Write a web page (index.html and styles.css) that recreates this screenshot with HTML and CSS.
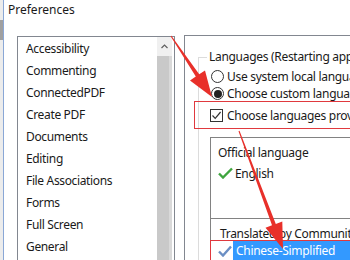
FILE: index.html
```html
<!DOCTYPE html>
<html lang="en">
<head>
    <meta charset="UTF-8">
    <title>Preferences</title>
    <link rel="stylesheet" href="styles.css">
</head>
<body>
    <div class="window">
        <div class="edge"><div class="edge-block"></div></div>

        <div class="main">
            <div class="title">Preferences</div>

            <div class="content">
                <!-- Categories -->
                <div class="listbox">
                    <ul class="categories">
                        <li>Accessibility</li>
                        <li>Commenting</li>
                        <li>ConnectedPDF</li>
                        <li>Create PDF</li>
                        <li>Documents</li>
                        <li>Editing</li>
                        <li>File Associations</li>
                        <li>Forms</li>
                        <li>Full Screen</li>
                        <li>General</li>
                    </ul>
                    <div class="scrollbar">
                        <div class="scroll-up">
                            <svg width="7" height="5" viewBox="0 0 7 5"><path d="M0.5 4 L3.5 1 L6.5 4" fill="none" stroke="#606060" stroke-width="1.2"/></svg>
                        </div>
                        <div class="scroll-thumb"></div>
                    </div>
                </div>

                <!-- Languages page -->
                <div class="panel">
                    <div class="group">
                        <div class="group-title">Languages (Restarting application required)</div>
                        <div class="options">
                            <div class="row first">
                                <span class="radio"></span>
                                <span class="label">Use system local language</span>
                            </div>
                            <div class="row">
                                <span class="radio checked"></span>
                                <span class="label">Choose custom language</span>
                            </div>
                            <div class="row check-row">
                                <span class="checkbox">
                                    <svg width="11" height="11" viewBox="0 0 11 11"><path d="M1.5 5.5 L4.2 8.3 L9.6 2" fill="none" stroke="#333" stroke-width="1.2"/></svg>
                                </span>
                                <span class="label">Choose languages provided by community</span>
                            </div>

                            <div class="lang-box">
                                <div class="lang-section official">
                                    <div class="lang-label">Official language</div>
                                    <div class="lang-item">
                                        <svg class="tick" width="15" height="12" viewBox="0 0 15 12"><path d="M1 6.5 L5 10.5 L14 1.5" fill="none" stroke="#3fa53f" stroke-width="2.4"/></svg>
                                        <span>English</span>
                                    </div>
                                </div>
                                <div class="lang-section community">
                                    <div class="lang-label">Translated by Community</div>
                                    <div class="lang-item selected">
                                        <svg class="tick" width="14" height="12" viewBox="0 0 14 12"><path d="M1 6.5 L5 10.5 L13 1.5" fill="none" stroke="#6b8fc4" stroke-width="2.4"/></svg>
                                        <span class="highlight">Chinese-Simplified</span>
                                    </div>
                                </div>
                            </div>
                        </div>
                    </div>
                </div>
            </div>
        </div>
    </div>

    <!-- Annotations drawn over the dialog -->
    <svg class="marks" width="350" height="260" viewBox="0 0 350 260">
        <rect x="194.5" y="101.5" width="170" height="27" fill="none" stroke="#e0393e" stroke-width="1"/>
        <rect x="210.5" y="240.5" width="150" height="30" fill="none" stroke="#e0393e" stroke-width="1"/>
        <polygon fill="#e8302a" points="170.6,36.3 195.8,76.5 190,80.4 212,97 205,70.4 199.2,74.3 171.4,35.7"/>
        <polygon fill="#e8302a" points="238.5,131.2 272,225.3 265.5,227.7 283,249 282.3,221.5 275.8,223.9 239.5,130.8"/>
    </svg>
</body>
</html>
```

FILE: styles.css
```css
* {
    box-sizing: border-box;
    margin: 0;
    padding: 0;
}

body {
    width: 350px;
    height: 260px;
    overflow: hidden;
    position: relative;
    background-color: #ffffff;
    color: #1a1a1a;
    font-family: 'Noto Sans', 'Open Sans', sans-serif;
    font-size: 12px;
}

.window {
    display: flex;
    height: 260px;
    overflow: hidden;
}

.edge {
    width: 4px;
    background-color: #ececec;
    border-right: 1px solid #8aa7d6;
    padding-top: 20px;
}

.edge-block {
    width: 3px;
    height: 20px;
    background-color: #a0a0a0;
}

.main {
    flex: 1;
    padding-left: 4px;
    min-width: 0;
}

.title {
    height: 20px;
    line-height: 20px;
}

.content {
    display: flex;
    align-items: flex-start;
    margin-top: 16px;
    margin-left: 9px;
}

/* category list */

.listbox {
    display: flex;
    flex: none;
    width: 158px;
    height: 230px;
    border: 1px solid #828790;
    padding-right: 2px;
}

.categories {
    flex: 1;
    list-style-type: none;
    padding-top: 1px;
}

.categories li {
    height: 22px;
    line-height: 22px;
    padding-left: 8px;
    letter-spacing: -0.35px;
}

.scrollbar {
    width: 15px;
    background-color: #f0f0f0;
}

.scroll-up {
    height: 18px;
    display: flex;
    align-items: center;
    justify-content: center;
}

.scroll-thumb {
    height: 210px;
    margin-top: 1px;
    background-color: #c9c9c9;
    border-right: 3px solid #d9d9d9;
}

/* languages page */

.panel {
    flex: 1;
    min-width: 0;
    height: 230px;
    margin-left: 9px;
    margin-top: -1px;
    border-top: 1px solid #828790;
    border-left: 1px solid #828790;
    padding-top: 21px;
    padding-left: 13px;
    white-space: nowrap;
    overflow: hidden;
    letter-spacing: -0.3px;
}

.group {
    border-top: 1px solid #dcdcdc;
    border-left: 1px solid #dcdcdc;
    height: 220px;
}

.group-title {
    width: fit-content;
    height: 16px;
    margin: -9px 0 0 8px;
    padding: 0 2px;
    line-height: 16px;
    background-color: #fff;
}

.options {
    padding-left: 11px;
}

.row {
    display: flex;
    align-items: center;
    height: 17px;
    gap: 3px;
}

.row.first {
    margin-top: 3px;
}

.row.check-row {
    margin-top: 5px;
}

.label {
    flex: none;
}

.radio {
    flex: none;
    width: 13px;
    height: 13px;
    margin-left: 1px;
    border: 1px solid #333;
    border-radius: 50%;
    background: #fff;
    display: flex;
    align-items: center;
    justify-content: center;
}

.radio.checked::after {
    content: '';
    width: 8px;
    height: 8px;
    border-radius: 50%;
    background-color: #222;
}

.checkbox {
    flex: none;
    width: 13px;
    height: 13px;
    border: 1px solid #333;
    display: flex;
    align-items: center;
    justify-content: center;
    margin-right: 1px;
}

.lang-box {
    margin-top: 13px;
    border-top: 1px solid #828282;
    border-left: 1px solid #828282;
}

.lang-section.official {
    padding: 7px 0 37px 7px;
}

.lang-section.community {
    border-top: 1px solid #828282;
    padding-top: 7px;
}

.lang-label {
    line-height: 16px;
}

.community .lang-label {
    line-height: 15px;
    padding-left: 9px;
}

.lang-item {
    display: flex;
    align-items: center;
    gap: 2px;
    margin-top: 4px;
    height: 16px;
}

.tick {
    flex: none;
}

.lang-item.selected {
    margin-top: 0;
    height: 19px;
    padding-left: 7px;
    gap: 1px;
}

.highlight {
    flex: 1;
    height: 19px;
    line-height: 19px;
    padding-left: 3px;
    background-color: #3399ff;
    color: #fff;
}

.marks {
    position: absolute;
    top: 0;
    left: 0;
    pointer-events: none;
}
```
